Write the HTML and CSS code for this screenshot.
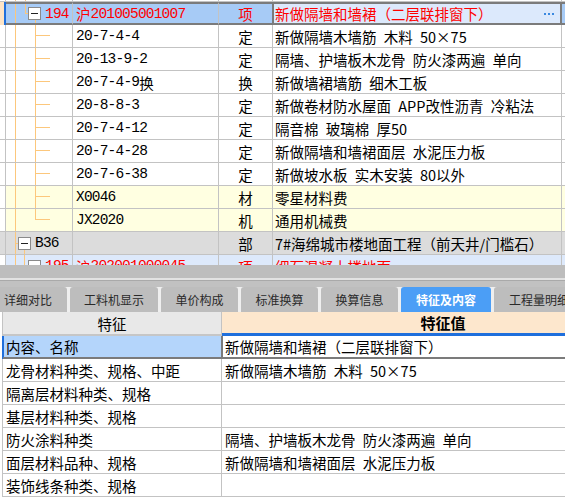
FILE: index.html
```html
<!DOCTYPE html>
<html lang="zh-CN">
<head>
<meta charset="utf-8">
<title>清单</title>
<link rel="stylesheet" href="styles.css">
</head>
<body>
<div class="top">
  <div class="grid">
    <div class="row">
      <div class="c g"></div>
      <div class="c t"><i class="ln v1"></i><i class="ln v2"></i></div>
      <div class="c"></div><div class="c"></div><div class="c"></div><div class="c e"></div>
    </div>
    <div class="row sel">
      <div class="c g"></div>
      <div class="c t mono red"><i class="ln v1"></i><i class="ln v2 half"></i><i class="ln h2"></i><b class="box"></b><i class="ln v3 fb"></i>194</div>
      <div class="c code red"><span class="cj">沪</span>201005001007</div>
      <div class="c ty red">项</div>
      <div class="c nm red cur"><span>新做隔墙和墙裙（二层联排窗下）</span><svg class="more" width="10" height="2" viewBox="0 0 10 2"><rect x="0" y="0" width="2" height="2"/><rect x="4" y="0" width="2" height="2"/><rect x="8" y="0" width="2" height="2"/></svg></div>
      <div class="c e"></div>
    </div>
    <div class="row">
      <div class="c g"></div>
      <div class="c t"><i class="ln v1"></i><i class="ln v3"></i><i class="ln h3"></i></div>
      <div class="c code">20-7-4-4</div>
      <div class="c ty">定</div>
      <div class="c nm">新做隔墙木墙筋&ensp;木料&ensp;50×75</div>
      <div class="c e"></div>
    </div>
    <div class="row">
      <div class="c g"></div>
      <div class="c t"><i class="ln v1"></i><i class="ln v3"></i><i class="ln h3"></i></div>
      <div class="c code">20-13-9-2</div>
      <div class="c ty">定</div>
      <div class="c nm">隔墙、护墙板木龙骨&ensp;防火漆两遍&ensp;单向</div>
      <div class="c e"></div>
    </div>
    <div class="row">
      <div class="c g"></div>
      <div class="c t"><i class="ln v1"></i><i class="ln v3"></i><i class="ln h3"></i></div>
      <div class="c code">20-7-4-9<span class="cj">换</span></div>
      <div class="c ty">换</div>
      <div class="c nm">新做墙裙墙筋&ensp;细木工板</div>
      <div class="c e"></div>
    </div>
    <div class="row">
      <div class="c g"></div>
      <div class="c t"><i class="ln v1"></i><i class="ln v3"></i><i class="ln h3"></i></div>
      <div class="c code">20-8-8-3</div>
      <div class="c ty">定</div>
      <div class="c nm">新做卷材防水屋面&ensp;APP改性沥青&ensp;冷粘法</div>
      <div class="c e"></div>
    </div>
    <div class="row">
      <div class="c g"></div>
      <div class="c t"><i class="ln v1"></i><i class="ln v3"></i><i class="ln h3"></i></div>
      <div class="c code">20-7-4-12</div>
      <div class="c ty">定</div>
      <div class="c nm">隔音棉&ensp;玻璃棉&ensp;厚50</div>
      <div class="c e"></div>
    </div>
    <div class="row">
      <div class="c g"></div>
      <div class="c t"><i class="ln v1"></i><i class="ln v3"></i><i class="ln h3"></i></div>
      <div class="c code">20-7-4-28</div>
      <div class="c ty">定</div>
      <div class="c nm">新做隔墙和墙裙面层&ensp;水泥压力板</div>
      <div class="c e"></div>
    </div>
    <div class="row">
      <div class="c g"></div>
      <div class="c t"><i class="ln v1"></i><i class="ln v3"></i><i class="ln h3"></i></div>
      <div class="c code">20-7-6-38</div>
      <div class="c ty">定</div>
      <div class="c nm">新做坡水板&ensp;实木安装&ensp;80以外</div>
      <div class="c e"></div>
    </div>
    <div class="row yl">
      <div class="c g"></div>
      <div class="c t"><i class="ln v1"></i><i class="ln v3"></i><i class="ln h3"></i></div>
      <div class="c code">X0046</div>
      <div class="c ty">材</div>
      <div class="c nm">零星材料费</div>
      <div class="c e"></div>
    </div>
    <div class="row yl">
      <div class="c g"></div>
      <div class="c t"><i class="ln v1"></i><i class="ln v3 half"></i><i class="ln h3"></i></div>
      <div class="c code">JX2020</div>
      <div class="c ty">机</div>
      <div class="c nm">通用机械费</div>
      <div class="c e"></div>
    </div>
    <div class="row gr">
      <div class="c g"></div>
      <div class="c t t2 mono"><i class="ln v1"></i><i class="ln h1"></i><b class="box b1"></b><i class="ln vb fb"></i>B36</div>
      <div class="c code"></div>
      <div class="c ty">部</div>
      <div class="c nm">7#海绵城市楼地面工程（前天井/门槛石）</div>
      <div class="c e"></div>
    </div>
    <div class="row lb">
      <div class="c g"></div>
      <div class="c t mono red"><i class="ln v1"></i><i class="ln vb half"></i><i class="ln hb"></i><b class="box b2"></b><i class="ln v3 fb2"></i>195</div>
      <div class="c code red"><span class="cj">沪</span>202001000045</div>
      <div class="c ty red">项</div>
      <div class="c nm red">细石混凝土楼地面</div>
      <div class="c e"></div>
    </div>
  </div>
</div>

<div class="split"></div>

<div class="tabbar">
  <div class="tabs">
    <div class="tab w1">详细对比</div>
    <div class="tab w2">工料机显示</div>
    <div class="tab w3">单价构成</div>
    <div class="tab w3">标准换算</div>
    <div class="tab w3">换算信息</div>
    <div class="tab w4 on">特征及内容</div>
    <div class="tab w4">工程量明细</div>
  </div>
</div>

<div class="feat">
  <div class="ftable">
    <div class="frow fhead">
      <div class="k">特征</div>
      <div class="v">特征值</div>
    </div>
    <div class="frow fsel">
      <div class="k">内容、名称</div>
      <div class="v">新做隔墙和墙裙（二层联排窗下）</div>
    </div>
    <div class="frow">
      <div class="k">龙骨材料种类、规格、中距</div>
      <div class="v">新做隔墙木墙筋&ensp;木料&ensp;50×75</div>
    </div>
    <div class="frow">
      <div class="k">隔离层材料种类、规格</div>
      <div class="v"></div>
    </div>
    <div class="frow">
      <div class="k">基层材料种类、规格</div>
      <div class="v"></div>
    </div>
    <div class="frow">
      <div class="k">防火涂料种类</div>
      <div class="v">隔墙、护墙板木龙骨&ensp;防火漆两遍&ensp;单向</div>
    </div>
    <div class="frow">
      <div class="k">面层材料品种、规格</div>
      <div class="v">新做隔墙和墙裙面层&ensp;水泥压力板</div>
    </div>
    <div class="frow">
      <div class="k">装饰线条种类、规格</div>
      <div class="v"></div>
    </div>
  </div>
</div>
</body>
</html>
```

FILE: styles.css
```css
html, body {
  margin: 0;
  padding: 0;
  width: 565px;
  height: 499px;
  overflow: hidden;
  background: #fff;
}
body {
  font-family: "Noto Sans CJK SC", "Noto Sans", sans-serif;
  font-size: 14.5px;
  color: #000;
}

/* ---------- top grid ---------- */
.top {
  height: 265px;
  overflow: hidden;
}
.grid {
  margin-top: -21px;
}
.row {
  display: grid;
  grid-template-columns: 6px 67px 146px 54px 289px 1fr;
  height: 23px;
}
.c {
  box-sizing: border-box;
  border-right: 1px solid #c3c3c3;
  border-bottom: 1px solid #c3c3c3;
  display: flex;
  align-items: center;
  white-space: nowrap;
  overflow: hidden;
  min-width: 0;
}
.c.e { border-right: none; }
.code,
.mono {
  font-family: "Liberation Mono", "Noto Sans CJK SC", monospace;
  font-size: 14.5px;
  letter-spacing: -0.8px;
}
.code { padding-left: 3px; }
.cj {
  font-family: "Noto Sans CJK SC", sans-serif;
  font-size: 14.5px;
  letter-spacing: 0;
}
.ty { justify-content: center; }
.nm { padding-left: 2px; }
.red { color: #ff0000; }

/* tree */
.t {
  position: relative;
  padding-left: 39px;
}
.t2 { padding-left: 29px; }
.ln {
  position: absolute;
  display: block;
  background: #fcc77c;
}
.v1 { left: 9px; top: 0; bottom: -1px; width: 1px; }
.v2 { left: 19px; top: 0; bottom: -1px; width: 1px; }
.v2.half { top: -2px; bottom: auto; height: 12px; }
.h2 { left: 19px; top: 9px; width: 4px; height: 1px; }
.v3 { left: 29px; top: 0; bottom: -1px; width: 1px; }
.v3.half { bottom: auto; height: 11px; }
.v3.fb { top: 16px; bottom: -2px; }
.v3.fb2 { top: 18px; }
.h3 { left: 29px; top: 10px; width: 15px; height: 1px; }
.h1 { left: 9px; top: 11px; width: 4px; height: 1px; }
.vb { left: 18px; top: 0; bottom: -1px; width: 1px; }
.vb.fb { top: 18px; }
.vb.half { bottom: auto; height: 11px; }
.hb { left: 18px; top: 10px; width: 5px; height: 1px; }
.box {
  position: absolute;
  display: block;
  left: 22px;
  top: 3px;
  width: 13px;
  height: 13px;
  box-sizing: border-box;
  border: 1px solid #8a8a8a;
  background: #fff;
}
.box::after {
  content: "";
  position: absolute;
  left: 2px;
  right: 2px;
  top: 5px;
  height: 1px;
  background: #222;
}
.box.b1 { left: 12px; top: 5px; }
.box.b2 { left: 22px; top: 5px; }

/* selected row */
.sel .c {
  background: #a7cbf6;
  border-top: 2px solid #7b7b7b;
  border-bottom: 2px solid #7b7b7b;
}
.sel .c.g {
  background: #fde4c6;
  border-top: none;
  border-bottom: none;
  border-right: 2px solid #1f6fdc;
}
.sel .ty { border-right-color: #7b7b7b; }
.sel .cur {
  background: #dce9fc;
  border-left: 1px solid #7b7b7b;
  border-right: 2px solid #7b7b7b;
  padding-left: 1px;
  justify-content: space-between;
  padding-right: 6px;
}
.more { fill: #3a88e0; flex: none; }

.yl .c:not(.g) { background: #ffffe1; }
.gr .c { background: #dcdcdc; }
.lb .c:not(.g) { background: #dde9fb; }

/* ---------- splitter + tabs ---------- */
.split {
  height: 13px;
  background: #bdbdbd;
}
.tabbar {
  box-sizing: border-box;
  height: 34px;
  border-top: 2px solid #e2e2e2;
  background: #c1c1c1;
  box-shadow: inset 0 1px #a9a9a9;
  padding-top: 7px;
  overflow: hidden;
}
.tabs {
  display: flex;
  height: 25px;
  background: #efefef;
  width: 700px;
  margin-left: -11px;
}
.tab {
  flex: none;
  height: 25px;
  margin-left: 3px;
  display: flex;
  align-items: center;
  justify-content: center;
  font-size: 12px;
  color: #2a2a2a;
  background: #bdbdbd;
  border-radius: 3px 3px 0 0;
}
.tab.w1 { width: 78px; margin-left: 0; }
.tab.w2 { width: 88px; }
.tab.w3 { width: 77px; }
.tab.w4 { width: 90px; }
.tab.on {
  background: #4b9ef6;
  color: #fff;
  font-weight: bold;
}

/* ---------- feature table ---------- */
.feat {
  overflow: hidden;
}
.ftable {
  width: 662px;
  margin-left: 2px;
}
.frow {
  display: grid;
  grid-template-columns: 219px 1fr;
  height: 23px;
  border-left: 1px solid #c3c3c3;
}
.frow .k,
.frow .v {
  box-sizing: border-box;
  display: flex;
  align-items: center;
  white-space: nowrap;
  overflow: hidden;
  border-bottom: 1px solid #c3c3c3;
  padding-left: 3px;
}
.frow .k { border-right: 1px solid #c3c3c3; }
.fhead { height: 24px; }
.fhead .k {
  background: #e8e8e8;
  justify-content: center;
  padding-left: 0;
  border-bottom: 2px solid #c6c6c6;
}
.fhead .v {
  background: #fde7cd;
  justify-content: center;
  padding-left: 0;
  font-weight: bold;
  font-size: 15px;
  border-bottom: 3px solid #1f6fdc;
}
.fsel { border-left-color: #1f6fdc; }
.fsel .k {
  background: #b4d5fb;
  box-shadow: inset 1px 0 #1f6fdc;
  border-bottom: 2px solid #7b7b7b;
  border-right-color: #7b7b7b;
}
.fsel .v {
  border-left: 1px solid #7b7b7b;
  border-bottom: 2px solid #7b7b7b;
  padding-left: 2px;
}
```
